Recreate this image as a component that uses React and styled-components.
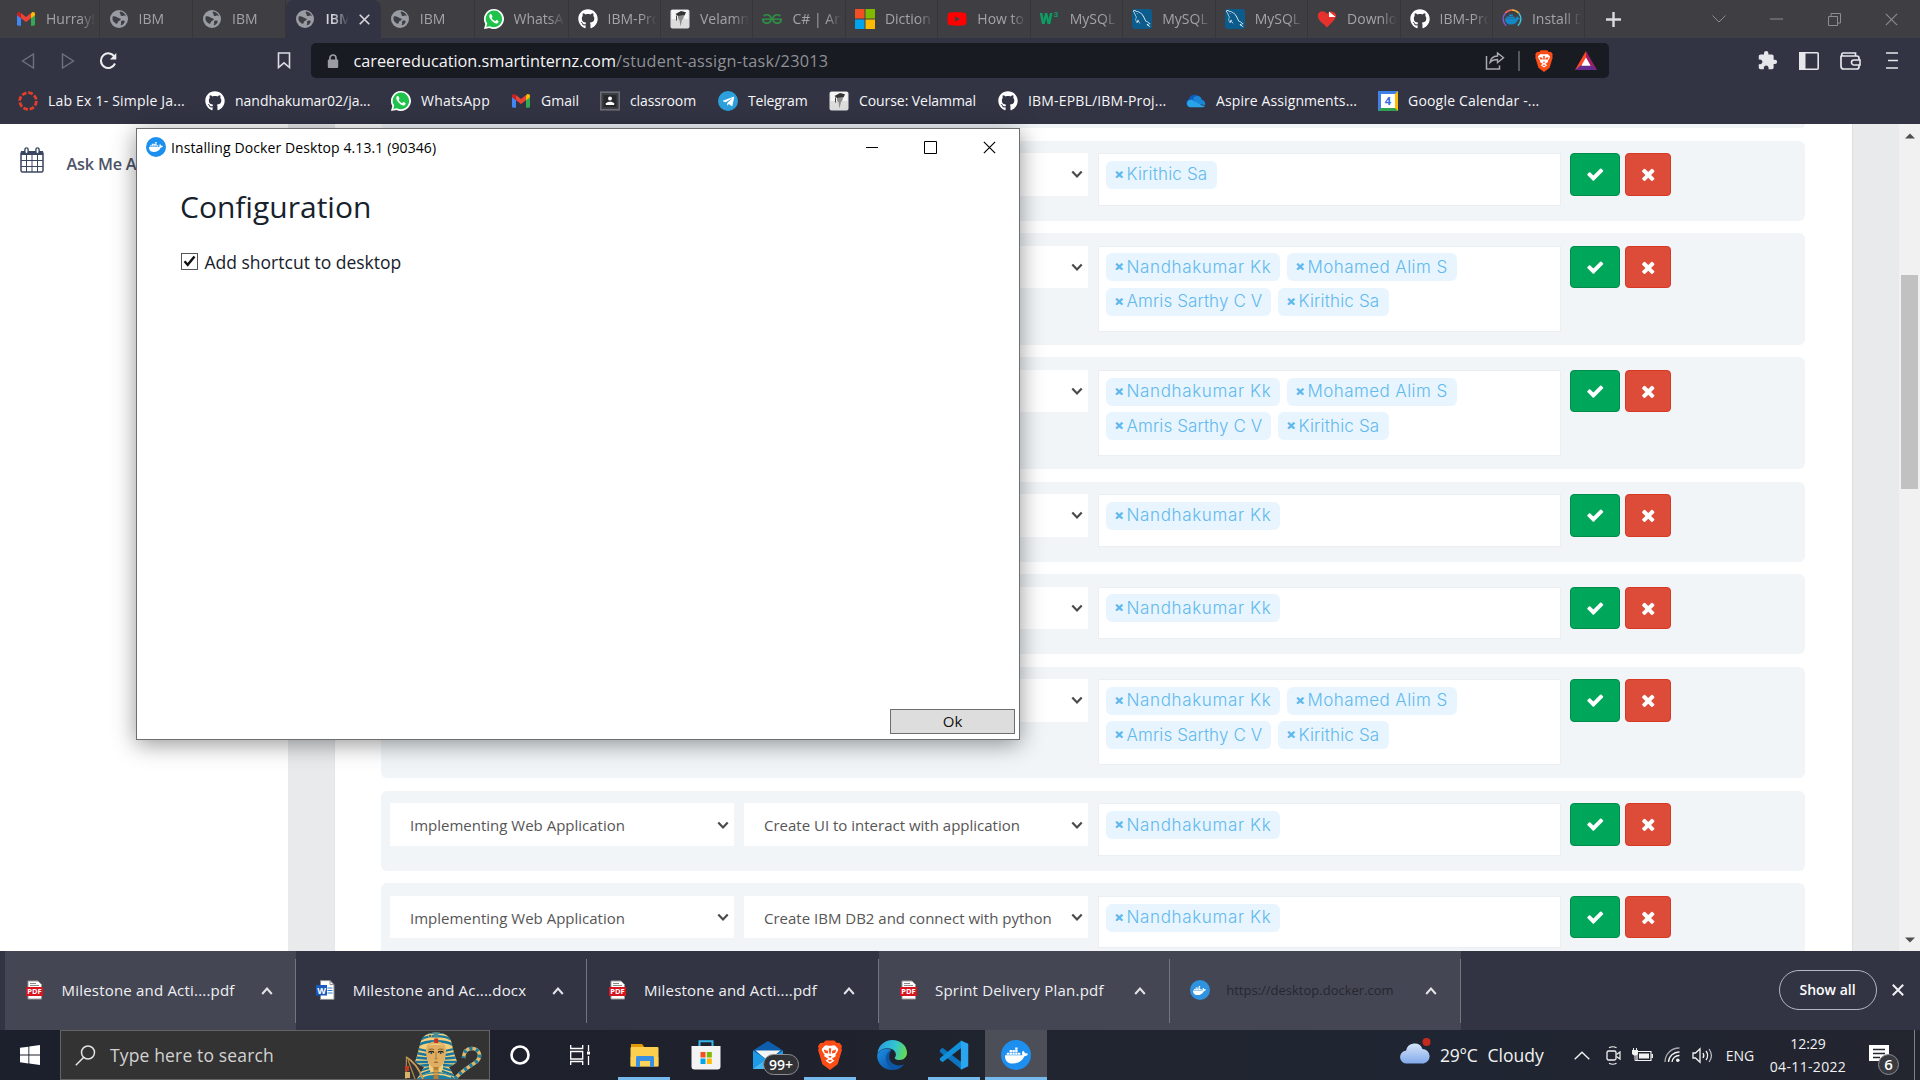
import React from "react";
import styled, { createGlobalStyle } from "styled-components";
import { FaGithub, FaDocker, FaTelegramPlane, FaYoutube } from "react-icons/fa";
import { SiGeeksforgeeks } from "react-icons/si";
import { GrMysql } from "react-icons/gr";
import { MdExtension } from "react-icons/md";

const GlobalStyle = createGlobalStyle`
  * { box-sizing: border-box; }
  body { margin: 0; background: #fff; }
`;

const ui = `"Open Sans", "Noto Sans", sans-serif`;

/* ---------- icons ---------- */

const Svg = ({ w = 20, h = w, vb, children, ...rest }) => (
  <svg width={w} height={h} viewBox={vb || `0 0 ${w} ${h}`} fill="none" {...rest}>
    {children}
  </svg>
);

const Gmail = () => (
  <Svg w={20} h={20}>
    <path d="M1 5.2v10.4c0 .7.6 1.2 1.200 1.200H5V9z" fill="#4285f4" />
    <path d="M19 5.2v10.400c0 .7-.6 1.200-1.200 1.200H15V9z" fill="#34a853" />
    <path d="M15 4.600V9.200l4-3V4.800c0-1.600-1.800-2.400-3-1.500z" fill="#fbbc04" />
    <path d="M5 4.600V9.200l-4-3V4.800c0-1.600 1.800-2.400 3-1.500z" fill="#c5221f" />
    <path d="M5 4.100 10 7.900l5-3.800v5.100l-5 3.800-5-3.800z" fill="#ea4335" />
  </Svg>
);

const Globe = () => (
  <Svg>
    <circle cx="10" cy="10" r="9" fill="#9a9ca4" />
    <path d="M3.200 6.500c2-1 3.800.2 5.300 1.300 1.500 1 3 .3 2.700 1.700-.3 1.600-2.400 1-2.800 2.500-.3 1.200-.8 2.300-1.900 1.600C4.800 12.500 2 10.500 3.200 6.500z" fill="#3e3e45" transform="translate(.5 1)" />
    <path d="M11 2.600c-1.200 1.500.8 2 .6 3.200-.2 1 1.200 1.600 2.500 1 1.500-.7 2.400.2 3 1.100-.6-2.900-3-5-6.100-5.300z" fill="#3e3e45" />
    <path d="M12.500 12c1.500-.8 3.300-.6 3.200.7-.3 1.700-2.200 3.400-3.700 3.600-.8-.6.500-1.300.1-2.300-.2-.9-.3-1.500.4-2z" fill="#3e3e45" />
  </Svg>
);

const Disc = styled.span`
  display: inline-flex;
  align-items: center;
  justify-content: center;
  flex: none;
  width: ${(p) => p.$size || 20}px;
  height: ${(p) => p.$size || 20}px;
  border-radius: ${(p) => p.$radius || "50%"};
  background: ${(p) => p.$bg};
  color: #fff;
  font-size: ${(p) => p.$icon || 14}px;
`;

const WhatsApp = () => (
  <Svg>
    <path d="M10 0a10 10 0 1 1-4.600 18.900L0 20l1.300-5A10 10 0 0 1 10 0z" fill="#fff" />
    <path d="M10 1.600a8.300 8.300 0 1 1-4.100 15.600l-3.600.9.9-3.500A8.300 8.300 0 0 1 10 1.600z" fill="#1fc24a" />
    <path d="M7.300 5.300c-.3-.5-.9-.4-1.300 0-1.200 1.200-1 3 .5 5 1.700 2.300 3.500 3.800 5.600 4.100 1.300.1 2.400-.6 2.500-2 0-.4-1.800-1.400-2.200-1.300-.4.1-.7 1.200-1.200 1.100-1.500-.5-2.800-1.700-3.500-3.100-.1-.5.8-.9.8-1.400 0-.4-.8-1.900-1.200-2.400z" fill="#fff" />
  </Svg>
);

const Canvas = () => (
  <Svg>
    <circle cx="10" cy="10" r="8.300" stroke="#e13f2b" strokeWidth="2.800" strokeDasharray="4.700 1.820" />
  </Svg>
);

const Graduate = () => (
  <Svg>
    <rect x=".5" y=".5" width="19" height="19" rx="2" fill="#dcdcdc" />
    <rect x="1.500" y="1" width="17" height="9" fill="#f4f4f4" />
    <path d="M5.500 5 11 2l5 1.200-1.500 3.300-6.500.5z" fill="#333" />
    <path d="M8 7c-.5 2 .3 3 1.500 4l1 6.500L12 11c1.500-1 2-2.500 1.800-4.200z" fill="#8c8c8c" />
    <path d="M6.500 6.500v5" stroke="#444" />
  </Svg>
);

const Windows = ({ size = 20, mono }) => (
  <Svg w={size} vb="0 0 20 20">
    {mono ? (
      <path d="M0 2.800 8.400 1.700v7.900H0zM9.300 1.500 20 0v9.600H9.300zM0 10.500h8.400v7.900L0 17.200zM9.300 10.500H20V20L9.300 18.500z" fill="#fff" />
    ) : (
      <>
        <path d="M0 0h9.500v9.500H0z" fill="#f25022" />
        <path d="M10.500 0H20v9.500h-9.500z" fill="#7fba00" />
        <path d="M0 10.500h9.500V20H0z" fill="#00a4ef" />
        <path d="M10.500 10.500H20V20h-9.500z" fill="#ffb900" />
      </>
    )}
  </Svg>
);

const W3 = styled.span`
  display: flex;
  align-items: flex-start;
  gap: 1px;
  width: 20px;
  flex: none;
  color: #0c9d63;
  font: 900 15px/18px "Roboto", sans-serif;
`;

const W3Power = styled.span`
  font: 700 8px/9px "Roboto", sans-serif;
`;

const Heart = () => (
  <Svg>
    <path d="M10 18.500C7 15 .8 11.800.8 6.800.8 1.700 7.500.3 10 5c1.500-3.500 7-3.500 8.700 0 1.600 5-4.700 9-8.700 13.500z" fill="#e5322d" />
    <path d="M12 2.500 18.700 8H12z" fill="#fff" />
  </Svg>
);

const DockerDocs = () => (
  <Svg>
    <path d="M3.200 4.200A9 9 0 0 1 10 1" stroke="#f26b5b" strokeWidth="1.500" />
    <path d="M10 1a9 9 0 0 1 6.800 3.200" stroke="#f5b33c" strokeWidth="1.500" />
    <path d="M16.800 4.200a9 9 0 0 1-1 12.500" stroke="#3fc5dc" strokeWidth="1.500" />
    <path d="M3.200 4.200a9 9 0 0 0 1 12.500" stroke="#7e5bd0" strokeWidth="1.500" />
    <path d="M3 9.300h11c.2-1.300 1-1.900 1.500-2 .6.400.9 1 .9 1.700 1-.2 1.600 0 2 .3-.5 1-1.300 1.300-2.300 1.300-1 3.200-3.400 5-7 5-4 0-6-2-6.100-6.300zM4.500 7.500h8V9h-8zM7 5.500h4V7H7z" fill="#1488c6" />
  </Svg>
);

const Contact = () => (
  <Svg>
    <rect x=".7" y="1.200" width="18.600" height="17.600" fill="#3b3e43" stroke="#6b6f74" strokeWidth="1.600" />
    <rect x="3.500" y="4" width="13" height="12" fill="#26282c" />
    <circle cx="10" cy="7.500" r="2" fill="#fff" />
    <path d="M5.800 14v-1.500c1.400-2.300 7-2.300 8.400 0V14z" fill="#fff" />
  </Svg>
);

const OneDrive = () => (
  <Svg>
    <path d="M2 15.500a4.200 4.200 0 0 1 .8-7.200A6 6 0 0 1 14 7.200l-3 4.800z" fill="#0f5cb8" />
    <path d="M7 8.500a4.500 4.500 0 0 1 8.800.3A4 4 0 0 1 19 14l-8-1z" fill="#1a86d8" />
    <path d="M3.500 16.300A4.200 4.200 0 0 1 2 9.800c2.500-1.800 4.500-1 6 .2l8 4.500 3 .3c-.7 1-1.700 1.500-3 1.500z" fill="#28a4ea" />
  </Svg>
);

const CalBox = styled.span`
  display: inline-flex;
  align-items: center;
  justify-content: center;
  flex: none;
  width: 20px;
  height: 20px;
  background: #fff;
  border-style: solid;
  border-width: 3.500px;
  border-color: #3f7fe8 #fbbc04 #30a14e #3f7fe8;
  color: #2b6de0;
  font: 700 11px/12px ${ui};
`;

const BraveLion = ({ size = 20 }) => (
  <Svg w={size} vb="0 0 24 24">
    <path d="M6.800 2.200 8.500.4h7l1.700 1.800 2.600.1 1.800 2.700-.5 1.600.4 1.600-3.400 11.200L12 23.900l-6.100-4.500L2.500 8.200l.4-1.600L2.400 5l1.800-2.700z" fill="#fb4d15" />
    <path d="M12 4.500c1.600.3 2.700-.3 3.600-.2 1 .3 2.500 2.200 3 3-.3 1.500-.8 2.400-2.200 4 .3 1 .3 1.900-.8 2.300L13.500 15l2 1.500-3.500 2.500-3.500-2.500 2-1.500-2.100-1.400c-1.100-.4-1.100-1.300-.8-2.300-1.400-1.600-1.900-2.500-2.200-4 .5-.8 2-2.700 3-3 .9-.1 2 .5 3.600.2z" fill="#fff" />
    <path d="m7 7.600 3.600 1.100-.4 2-2.400-.6zM17 7.600l-3.600 1.100.4 2 2.400-.6zM10.600 12.700h2.800L12 14.600zM12 6.300l1 .6-.5 4h-1l-.5-4zM10.200 16.500l1.800-.8 1.800.8L12 17.500z" fill="#fb4d15" />
  </Svg>
);

const Bat = () => (
  <Svg w={22} h={20}>
    <path d="M11 0 0 19l11-5.500z" fill="#ff4724" />
    <path d="M11 0l11 19-11-5.500z" fill="#9e1f63" />
    <path d="M0 19h22l-6-5H6z" fill="#662d91" />
    <path d="m11 6.500 4.700 8.200H6.300z" fill="#fff" />
  </Svg>
);

const CheckMark = () => (
  <Svg w={18.500} vb="0 0 1792 1792">
    <path fill="#fff" d="M1671 566q0 40-28 68l-724 724-136 136q-28 28-68 28t-68-28l-136-136-362-362q-28-28-28-68t28-68l136-136q28-28 68-28t68 28l294 295 656-657q28-28 68-28t68 28l136 136q28 28 28 68z" />
  </Svg>
);

const CrossMark = () => (
  <Svg w={18.500} vb="0 0 1792 1792">
    <path fill="#fff" d="M1490 1322q0 40-28 68l-136 136q-28 28-68 28t-68-28l-294-294-294 294q-28 28-68 28t-68-28l-136-136q-28-28-28-68t28-68l294-294-294-294q-28-28-28-68t28-68l136-136q28-28 68-28t68 28l294 294 294-294q28-28 68-28t68 28l136 136q28 28 28 68t-28 68l-294 294 294 294q28 28 28 68z" />
  </Svg>
);

const Chevron = ({ up, w = 11, stroke = "#4a4a4a", sw = 2.200 }) => (
  <Svg w={w} h={w} vb="0 0 12 12">
    <path d={up ? "M1.200 9 6 3.500 10.800 9" : "M1.300 3.500 6 8.500l4.700-5"} stroke={stroke} strokeWidth={sw} />
  </Svg>
);

const Cross = ({ w = 12, stroke = "#d8d8dc", sw = 1.800 }) => (
  <Svg w={w} vb="0 0 12 12">
    <path d="m.8.800 10.400 10.400M11.200.800.8 11.200" stroke={stroke} strokeWidth={sw} />
  </Svg>
);

const PdfIcon = () => (
  <Svg w={17} h={20}>
    <path d="M2 1h10l3.500 3.500V19H2z" fill="#fff" stroke="#9a9a9a" />
    <path d="M4 3.500h6M4 5.500h9" stroke="#8a8a8a" />
    <rect x="0" y="7" width="17" height="9" fill="#d8141f" />
    <text x="8.500" y="14.300" textAnchor="middle" fill="#fff" fontFamily="Open Sans" fontWeight="700" fontSize="7.500">PDF</text>
  </Svg>
);

const WordIcon = () => (
  <Svg w={19} h={20}>
    <path d="M4.500.6h9.500l4 4V19.400H4.500z" fill="#fff" stroke="#8a8a8a" />
    <path d="M14 .6v4h4" stroke="#8a8a8a" />
    <path d="M11.500 8h5M11.500 10.500h5M11.500 13h5" stroke="#2b7cd3" strokeWidth="1.200" />
    <rect x="0" y="5" width="11" height="10.500" fill="#185abd" />
    <text x="5.500" y="13.500" textAnchor="middle" fill="#fff" fontFamily="Open Sans" fontWeight="700" fontSize="9">W</text>
  </Svg>
);

const Pharaoh = () => (
  <Svg w={78} h={48}>
    <defs>
      <clipPath id="nemes">
        <path d="M32 1.500c9 0 14 4 15.500 10 1.500 7 3 13 5.500 19-2 3-5 4-8 5.500L52 48H13l7-12c-3-1-7-3-9-5.500C13.500 25 14.500 18 16.500 11.500 18.500 5 23 1.500 32 1.500z" />
      </clipPath>
    </defs>
    <g clipPath="url(#nemes)">
      <rect width="78" height="48" fill="#f3cf7a" />
      <g stroke="#1576a0" strokeWidth="2.300">
        <path d="M20 3.500c4-3 20-3 24 0M17 8.500c6-4.500 24-4.500 30 0M15 14c7-5 27-5 34 0" />
        <path d="M12 17.500 23 20M12 22l11 2M11 26.500l12 1M10 31l14 0M13 35l12-1M15 40l10-3M12 45l14-5" />
        <path d="M52 17.500 41 20M52 22l-11 2M53 26.500l-12 1M54 31l-14 0M51 35l-12-1M49 40l-10-3M52 45l-14-5" />
      </g>
    </g>
    <path d="M22 20c0-7 4-9.500 10-9.500S42 13 42 20c0 8-3.500 15-7.500 17.500h-5C25.500 35 22 28 22 20z" fill="#dfae62" />
    <path d="M24 15c3-3 13-3 16 0-2-1-5-1.200-8-1.200S26 14 24 15z" fill="#f6d98c" />
    <path d="M24.500 21.500c1.500-1.500 4-1.500 5.500 0M34 21.500c1.500-1.500 4-1.500 5.500 0" stroke="#1a1a1a" strokeWidth="1.300" />
    <path d="M24.500 18.800c1.500-1 4-1 5.500 0M34 18.800c1.500-1 4-1 5.500 0" stroke="#6b4a1e" strokeWidth=".8" />
    <circle cx="27.300" cy="22" r="1" fill="#14455c" />
    <circle cx="36.700" cy="22" r="1" fill="#14455c" />
    <path d="M32 21v6.500M30.500 27.800h3" stroke="#a8722d" strokeWidth=".9" />
    <path d="M29.500 31.200c1.700-.8 3.300-.8 5 0-1.700 1-3.300 1-5 0z" fill="#9a5a30" />
    <path d="M30.200 7.500h4v4.500h-4z" fill="#c8321f" />
    <circle cx="32" cy="4" r="2.600" fill="#4a8c94" />
    <circle cx="26" cy="5" r="1.600" fill="#2d5f66" stroke="#f3cf7a" strokeWidth=".6" />
    <path d="M13 48c6-5 12-7 19-7s14 2 19 7z" fill="#1a7fa5" />
    <path d="M17 46c9-4 21-4 30 0" stroke="#f3cf7a" strokeWidth="1.500" />
    <path d="M29.500 36h5L34.500 48h-5z" fill="#b47e38" />
    <path d="M30 40h4M30 43h4" stroke="#e6bd6a" />
    <path d="M2 26c7 4 13 11 17 22" stroke="#c79a55" strokeWidth="2" />
    <path d="M2.500 26 2 48M4 29l7 19" stroke="#b5894b" strokeWidth="1.200" />
    <path d="M1 35h4v5H1z" fill="#c43a20" />
    <path d="M1 41h5v6H1z" fill="#d8b36a" />
    <path d="M51 48c6-8 14-12 21-17 6-5 4-13-4-13.500-5-.2-8 3-8.500 9.500" stroke="#e3b868" strokeWidth="3.600" />
    <path d="M51 48c6-8 14-12 21-17 6-5 4-13-4-13.500-5-.2-8 3-8.500 9.500" stroke="#1a7fa5" strokeWidth="3.600" strokeDasharray="3 3.500" />
  </Svg>
);

const Explorer = () => (
  <Svg w={29} h={24}>
    <path d="M1 1h11l2 2.500V6H1z" fill="#e19a00" />
    <rect x=".5" y="4" width="28" height="19.500" rx="1" fill="#fccf4f" />
    <path d="M.5 14h28v9.500H.5z" fill="#fdd663" opacity=".6" />
    <path d="M6 24v-9.500C6 13.500 6.700 13 7.500 13h15c.8 0 1.500.6 1.500 1.500V24h-4v-6H10v6z" fill="#3a90e0" />
  </Svg>
);

const Store = () => (
  <Svg w={30} h={30}>
    <path d="M8.500 7V1.300h13V7" stroke="#35b5ea" strokeWidth="2" />
    <path d="M.5 6h29v20.500a3 3 0 0 1-3 3h-23a3 3 0 0 1-3-3z" fill="#f3f3f3" />
    <path d="M9.500 12h5v5.500h-5z" fill="#f25022" />
    <path d="M15.800 12h5v5.500h-5z" fill="#7fba00" />
    <path d="M9.500 18.500h5V24h-5z" fill="#00a4ef" />
    <path d="M15.800 18.500h5V24h-5z" fill="#ffb900" />
  </Svg>
);

const Mail = () => (
  <Svg w={30} h={30}>
    <path d="M0 10.500 15 1l15 9.500L15 20z" fill="#0d5fae" />
    <path d="M2.500 10.500h25L15 21z" fill="#f4f4f4" />
    <path d="M0 10.500 15 20l15-9.500V29H0z" fill="#1d9be6" />
    <path d="m0 29 15-11 15 11z" fill="#45b8f2" />
  </Svg>
);

const Edge = () => (
  <Svg w={30} h={30}>
    <defs>
      <linearGradient id="edgeTop" x1="2" y1="6" x2="29" y2="14" gradientUnits="userSpaceOnUse">
        <stop offset="0" stopColor="#2b9de0" />
        <stop offset=".55" stopColor="#32c5cf" />
        <stop offset="1" stopColor="#64dc52" />
      </linearGradient>
      <linearGradient id="edgeLow" x1="2" y1="12" x2="20" y2="30" gradientUnits="userSpaceOnUse">
        <stop offset="0" stopColor="#1b88dc" />
        <stop offset="1" stopColor="#0b4b9b" />
      </linearGradient>
    </defs>
    <path d="M.5 13C1.500 5.500 7.500 0 15.200 0 23.500 0 30 5.600 30 12.800c0 4.700-3.500 7.200-7.200 7.200-4 0-5.800-1.600-4.800-2.800 1.800-2 .9-6.200-2.800-8C10.500 7 3.500 8.500.5 13z" fill="url(#edgeTop)" />
    <path d="M.3 14.500C2 9.500 9.500 7 14.500 10c-3 1.500-4.200 4.500-4 7.500.3 5 4.800 8.500 10 8.500 2.300 0 4.200-.6 6.200-1.600C24 28 19.800 30 15.200 30 6.500 30-.6 23.200.3 14.500z" fill="url(#edgeLow)" />
    <path d="M14.500 10c-5 2-6.800 7-5 12 1.500 4 5 7 9.500 7.600 3.500-.8 6.300-2.800 8.200-5.300-7 3.300-15-.8-15-7.300 0-2.800.8-5 2.300-7z" fill="#0c56a6" />
  </Svg>
);

const VsCode = () => (
  <Svg w={30} h={30} vb="0 0 24 24">
    <path d="M.7 8 2.800 6.200 18 17.800V23.600L.7 9.500z" fill="#0d74bf" />
    <path d="M.7 16 2.800 17.800 18 6.200V.4L.7 14.500z" fill="#1390dc" />
    <path d="M17.500.3 23.400 3v18l-5.900 2.700z" fill="#2aa5f0" />
  </Svg>
);

const Cloud = () => (
  <Svg w={32} h={26}>
    <defs>
      <linearGradient id="cloud" x1="0" y1="4" x2="0" y2="26" gradientUnits="userSpaceOnUse">
        <stop offset="0" stopColor="#dce9fb" />
        <stop offset="1" stopColor="#7fa8ea" />
      </linearGradient>
    </defs>
    <path d="M7 25.500a6.500 6.500 0 0 1-.8-13A8.500 8.500 0 0 1 22.500 11 7.300 7.300 0 0 1 23.500 25.500z" fill="url(#cloud)" />
    <circle cx="26.500" cy="4" r="4" fill="#c42b1c" />
  </Svg>
);

/* ---------- browser chrome ---------- */

const Screen = styled.div`
  position: relative;
  display: flex;
  flex-direction: column;
  width: 1920px;
  height: 1080px;
  overflow: hidden;
  font-family: ${ui};
  background: #fff;
`;

const TabStrip = styled.div`
  display: flex;
  flex: none;
  height: 38px;
  padding-left: 7px;
  background: #3f3e43;
`;

const Tab = styled.div`
  display: flex;
  align-items: center;
  flex: none;
  width: ${(p) => p.$w}px;
  padding: 0 ${(p) => (p.$active ? 9 : 3)}px 0 9px;
  gap: 10px;
  background: ${(p) => (p.$active ? "#323444" : "transparent")};
  border-radius: ${(p) => (p.$active ? "8px 8px 0 0" : 0)};
  border-right: 1px solid ${(p) => (p.$active ? "transparent" : "#36353a")};
  & > svg { flex: none; }
`;

const TabTitle = styled.span`
  flex: ${(p) => (p.$active ? "0 0 24px" : "1 1 0")};
  min-width: 0;
  white-space: nowrap;
  font-size: 14px;
  line-height: 20px;
  color: ${(p) => (p.$active ? "#d3d4da" : "#a4a4a8")};
  font-weight: ${(p) => (p.$active ? 600 : 400)};
  mask-image: linear-gradient(90deg, #000 calc(100% - 16px), transparent 100%);
`;

const NewTab = styled.div`
  display: flex;
  align-items: center;
  justify-content: center;
  width: 57px;
`;

const WindowButtons = styled.div`
  display: flex;
  margin-left: auto;
`;

const WindowButton = styled.div`
  display: flex;
  align-items: center;
  justify-content: center;
  width: 57.300px;
`;

const Toolbar = styled.div`
  display: flex;
  align-items: center;
  flex: none;
  height: 45px;
  background: #323444;
`;

const NavGroup = styled.div`
  display: flex;
  width: 304px;
  padding-left: 8px;
  & > :last-child { margin-left: auto; }
`;

const NavButton = styled.div`
  display: flex;
  align-items: center;
  justify-content: center;
  width: ${(p) => p.$w || 40}px;
  height: 36px;
`;

const AddressBar = styled.div`
  display: flex;
  align-items: center;
  width: 1298px;
  height: 35px;
  margin-left: 7px;
  padding: 0 12px 0 15px;
  border-radius: 5px;
  background: #191b22;
`;

const Url = styled.div`
  display: flex;
  margin-left: 13.500px;
  font-size: 16.250px;
  line-height: 24px;
  color: #f4f4f6;
  white-space: nowrap;
`;

const UrlPath = styled.span`
  letter-spacing: 0.26px;
  color: #8f9196;
`;

const AddressTools = styled.div`
  display: flex;
  align-items: center;
  gap: 20px;
  margin-left: auto;
`;

const ShareSlot = styled.div`
  display: flex;
  padding-right: 13px;
  margin-right: -7px;
  border-right: 2px solid #56585f;
  height: 20px;
`;

const Extensions = styled.div`
  display: flex;
  margin-left: auto;
  padding-right: 7px;
`;

const BookmarksBar = styled.div`
  display: flex;
  flex: none;
  height: 41px;
  padding: 0 0 5px 18px;
  background: #323444;
`;

const Bookmark = styled.div`
  display: flex;
  align-items: center;
  flex: none;
  gap: 10px;
  width: ${(p) => p.$w}px;
  font-size: 14px;
  letter-spacing: ${(p) => p.$ls || 0}px;
  white-space: nowrap;
  color: #f6f6f8;
  & > svg { flex: none; }
  & > :last-child { padding-bottom: 1.500px; }
`;

/* ---------- web page ---------- */

const Page = styled.div`
  display: flex;
  flex: none;
  height: 827px;
  overflow: hidden;
  background: #e9eaec;
`;

const Sidebar = styled.div`
  flex: none;
  width: 288px;
  padding: 23px 0 0 19.500px;
  background: #fff;
`;

const SidebarItem = styled.div`
  display: flex;
  align-items: center;
  gap: 23px;
  height: 30px;
  font-size: 16.250px;
  font-weight: 600;
  letter-spacing: -0.2px;
  line-height: 28px;
  color: #4d5468;
  & > svg { margin-top: -4px; }
  & > span { padding-top: 3px; }
`;

const Panel = styled.div`
  display: flex;
  flex-direction: column;
  gap: 12.500px;
  flex: none;
  width: 1519px;
  margin-left: 46px;
  padding: 0 47px 0 46px;
  background: #fff;
  border-left: 1px solid #e4e6e9;
  border-right: 1px solid #dcdee0;
`;

const TaskRow = styled.div`
  display: flex;
  align-items: flex-start;
  flex: none;
  height: ${(p) => p.$h}px;
  padding: 12.500px 9px 0;
  border-radius: 6px;
  background: #f1f5f8;
`;

const RowTail = styled.div`
  flex: none;
  height: 4px;
  border-radius: 0 0 6px 6px;
  background: #f1f5f8;
`;

const Select = styled.div`
  display: flex;
  align-items: center;
  justify-content: space-between;
  flex: none;
  width: 344px;
  height: 42.500px;
  margin-right: 10px;
  padding: 1px 5px 0 20px;
  background: #fff;
  color: #565656;
  font-size: 15px;
  white-space: nowrap;
  & > svg { margin-top: -1px; }
`;

const Assignees = styled.div`
  display: flex;
  flex-wrap: wrap;
  align-content: flex-start;
  gap: 6.600px 7px;
  flex: none;
  width: 463px;
  height: ${(p) => p.$h}px;
  margin-right: 9px;
  padding: 6.800px 0 0 7px;
  background: #fff;
  border: 1px solid #eaeff3;
`;

const Tag = styled.div`
  display: flex;
  align-items: center;
  width: ${(p) => p.$w}px;
  height: 28px;
  padding: 0 0 1px 8.500px;
  border-radius: 6px;
  background: #e8f5fe;
  color: #62b9ed;
  font: 300 17px "Inter", sans-serif;
  letter-spacing: ${(p) => p.$ls}px;
  white-space: nowrap;
`;

const TagRemove = styled.span`
  width: 12px;
  letter-spacing: 0;
  font: 700 11px "DejaVu Sans", sans-serif;
  color: #5cb8ee;
  -webkit-text-stroke: 0.8px #5cb8ee;
`;

const ActionButton = styled.div`
  display: flex;
  align-items: center;
  justify-content: center;
  width: ${(p) => (p.$danger ? 46 : 50)}px;
  height: 42.500px;
  margin-right: 5px;
  border-radius: 4px;
  border: 1px solid ${(p) => (p.$danger ? "#d73925" : "#008d4c")};
  background: ${(p) => (p.$danger ? "#dd4b39" : "#00a65a")};
`;

const ScrollTrack = styled.div`
  display: flex;
  flex-direction: column;
  align-items: center;
  justify-content: space-between;
  width: 21px;
  margin-left: auto;
  padding: 9px 0 8px;
  background: #f1f1f1;
`;

const ScrollThumb = styled.div`
  width: 17px;
  height: 214px;
  margin: 136px 0 auto;
  background: #c1c1c1;
`;

/* ---------- installer window ---------- */

const Installer = styled.div`
  position: absolute;
  left: 136px;
  top: 128px;
  display: flex;
  flex-direction: column;
  width: 884px;
  height: 612px;
  border: 1px solid #6d6e70;
  background: #fff;
  box-shadow: 0 4px 22px rgba(0, 0, 0, 0.42);
`;

const TitleBar = styled.div`
  display: flex;
  align-items: center;
  height: 36px;
  padding-left: 9px;
  font-size: 14px;
  letter-spacing: 0.1px;
  color: #000;
`;

const TitleText = styled.span`
  margin-left: 5px;
`;

const CaptionButtons = styled(WindowButtons)`
  padding-right: 0.500px;
`;

const CaptionButton = styled.div`
  display: flex;
  justify-content: center;
  width: 58.600px;
`;

const InstallerBody = styled.div`
  flex: 1;
  padding: 21px 0 0 43px;
  color: #17212b;
`;

const Heading = styled.div`
  font-size: 30px;
  line-height: 42px;
`;

const CheckRow = styled.div`
  display: flex;
  align-items: center;
  gap: 7px;
  margin-top: 22px;
  padding-left: 0.500px;
  font-size: 17.500px;
  line-height: 24px;
`;

const CheckBox = styled.span`
  display: flex;
  align-items: center;
  justify-content: center;
  width: 17px;
  height: 17px;
  margin-top: -2px;
  border: 1px solid #555;
`;

const InstallerFooter = styled.div`
  display: flex;
  justify-content: flex-end;
  padding: 0 4px 5px;
`;

const OkButton = styled.div`
  width: 125px;
  height: 25px;
  border: 1px solid #6f6f6f;
  background: #dddddd;
  text-align: center;
  font-size: 15px;
  line-height: 23px;
  color: #111;
`;

/* ---------- downloads shelf ---------- */

const Shelf = styled.div`
  display: flex;
  flex: none;
  height: 79px;
  padding-left: 5px;
  background: #323444;
`;

const DownloadItem = styled.div`
  display: flex;
  align-items: center;
  width: 291.200px;
  background: ${(p) => (p.$lit ? "#444654" : "transparent")};
`;

const DownloadIcon = styled.span`
  display: flex;
  justify-content: center;
  width: 56.500px;
  padding: 0 0 1px 3px;
`;

const DownloadName = styled.span`
  flex: 1;
  padding-bottom: 2px;
  font-size: ${(p) => (p.$dim ? 13 : 15)}px;
  letter-spacing: ${(p) => (p.$dim ? 0 : 0.2)}px;
  color: ${(p) => (p.$dim ? "#252830" : "#f0f0f2")};
  white-space: nowrap;
`;

const DownloadMenu = styled.span`
  display: flex;
  align-items: center;
  justify-content: flex-start;
  width: 35.500px;
  height: 64px;
  border-right: 1px solid #73757f;
`;

const ShelfActions = styled.div`
  display: flex;
  align-items: center;
  gap: 15px;
  margin-left: auto;
  padding: 0 16.500px 1px 0;
`;

const ShowAll = styled.div`
  width: 98px;
  height: 40px;
  border: 1px solid #b4b6c4;
  border-radius: 20px;
  text-align: center;
  font-size: 14px;
  font-weight: 600;
  line-height: 37px;
  color: #fff;
`;

/* ---------- taskbar ---------- */

const Taskbar = styled.div`
  display: flex;
  flex: none;
  height: 50px;
  background: linear-gradient(90deg, #1c202c 0%, #1f222d 40%, #20252f 60%, #1f2532 75%, #23252f 100%);
`;

const StartButton = styled.div`
  display: flex;
  align-items: center;
  justify-content: center;
  width: 60px;
`;

const SearchBox = styled.div`
  display: flex;
  align-items: center;
  width: 430px;
  padding: 0 7px 0 14px;
  border: 1px solid #646464;
  background: #333333;
  color: #d2d2d2;
  font-size: 17.500px;
  letter-spacing: 0.15px;
  & > svg:last-child { margin-left: auto; }
`;

const SearchText = styled.span`
  margin-left: 14px;
`;

const TaskButton = styled.div`
  position: relative;
  display: flex;
  align-items: center;
  justify-content: center;
  width: ${(p) => p.$w || 62}px;
  background: ${(p) => (p.$current ? "#4c4e58" : "transparent")};
  &::after {
    content: "";
    position: absolute;
    bottom: 0;
    left: ${(p) => (p.$current ? 0 : 5)}px;
    right: ${(p) => (p.$current ? 0 : 5)}px;
    height: ${(p) => (p.$open || p.$current ? 3 : 0)}px;
    background: #76b9ed;
  }
`;

const PinnedApps = styled.div`
  display: flex;
  margin-left: 3px;
`;

const MailBadge = styled.span`
  position: absolute;
  left: 26px;
  top: 24px;
  width: 36px;
  height: 21px;
  border: 1px solid #8d8f92;
  border-radius: 11px;
  background: #303236;
  color: #fff;
  text-align: center;
  font-size: 14px;
  font-weight: 600;
  line-height: 19px;
`;

const Tray = styled.div`
  display: flex;
  margin-left: auto;
  padding-right: 5px;
  color: #f2f2f2;
`;

const Weather = styled.div`
  display: flex;
  align-items: center;
  width: 166px;
  font-size: 17.500px;
  white-space: pre;
  & > svg { margin: -8px 8px 0 0; }
  span { margin-right: 10px; letter-spacing: -0.250px; }
`;

const TrayCell = styled.div`
  display: flex;
  align-items: center;
  justify-content: center;
  width: ${(p) => p.$w}px;
  font-size: 14px;
`;

const Clock = styled.div`
  display: flex;
  flex-direction: column;
  align-items: center;
  width: 88px;
  padding-top: 2px;
  font-size: 14px;
  line-height: 23px;
  white-space: nowrap;
`;

const DateText = styled.span`
  letter-spacing: 0.34px;
`;

const Notifications = styled.div`
  position: relative;
  display: flex;
  width: 63px;
  padding: 15px 0 0 17px;
  border-right: 1px solid #7d8087;
`;

const CountBadge = styled.span`
  position: absolute;
  left: 26px;
  top: 24px;
  width: 21px;
  height: 21px;
  border: 1px solid #8b8d91;
  border-radius: 50%;
  background: #393b40;
  color: #fff;
  text-align: center;
  font-size: 15px;
  font-weight: 600;
  line-height: 19px;
`;

/* ---------- data ---------- */

const Github = () => <FaGithub size={20} color="#fff" />;
const Mysql = () => <Disc $bg="#0b5c8c" $radius="3px" $icon={18}><GrMysql /></Disc>;

const tabs = [
  { icon: <Gmail />, title: "Hurray!", w: 92.6 },
  { icon: <Globe />, title: "IBM", w: 93.4 },
  { icon: <Globe />, title: "IBM", w: 93.5 },
  { icon: <Globe />, title: "IBM", w: 94.3, active: true },
  { icon: <Globe />, title: "IBM", w: 93.8 },
  { icon: <WhatsApp />, title: "WhatsA", w: 94 },
  { icon: <Github />, title: "IBM-Pro" },
  { icon: <Graduate />, title: "Velamm" },
  { icon: <SiGeeksforgeeks size={20} color="#2f8d46" />, title: "C# | Arr" },
  { icon: <Windows />, title: "Diction" },
  { icon: <FaYoutube size={20} color="#ff0000" />, title: "How to" },
  { icon: <W3>W<W3Power>3</W3Power></W3>, title: "MySQL" },
  { icon: <Mysql />, title: "MySQL" },
  { icon: <Mysql />, title: "MySQL" },
  { icon: <Heart />, title: "Downlo" },
  { icon: <Github />, title: "IBM-Pro" },
  { icon: <DockerDocs />, title: "Install D" },
];

const bookmarks = [
  { icon: <Canvas />, label: "Lab Ex 1- Simple Ja...", w: 187, ls: 0.2 },
  { icon: <Github />, label: "nandhakumar02/ja...", w: 186, ls: -0.02 },
  { icon: <WhatsApp />, label: "WhatsApp", w: 120, ls: 0.26 },
  { icon: <Gmail />, label: "Gmail", w: 89 },
  { icon: <Contact />, label: "classroom", w: 118, ls: -0.1 },
  { icon: <Disc $bg="#2ca0dc" $icon={13}><FaTelegramPlane /></Disc>, label: "Telegram", w: 111, ls: -0.2 },
  { icon: <Graduate />, label: "Course: Velammal", w: 169, ls: -0.07 },
  { icon: <Github />, label: "IBM-EPBL/IBM-Proj...", w: 188, ls: 0.17 },
  { icon: <OneDrive />, label: "Aspire Assignments...", w: 192, ls: 0.1 },
  { icon: <CalBox>4</CalBox>, label: "Google Calendar -...", w: 170, ls: 0.2 },
];

const people = {
  nk: { name: "Nandhakumar Kk", w: 174, ls: 0.64 },
  ma: { name: "Mohamed Alim S", w: 170, ls: 0.42 },
  as: { name: "Amris Sarthy C V", w: 165, ls: 0.1 },
  ks: { name: "Kirithic Sa", w: 111, ls: 0.18 },
};
const everyone = ["nk", "ma", "as", "ks"];

const rows = [
  { who: ["ks"] },
  { who: everyone },
  { who: everyone },
  { who: ["nk"] },
  { who: ["nk"] },
  { who: everyone },
  { epic: "Implementing Web Application", task: "Create UI to interact with application", who: ["nk"] },
  { epic: "Implementing Web Application", task: "Create IBM DB2 and connect with python", who: ["nk"] },
];

const downloads = [
  { icon: <PdfIcon />, name: "Milestone and Acti....pdf", lit: true },
  { icon: <WordIcon />, name: "Milestone and Ac....docx" },
  { icon: <PdfIcon />, name: "Milestone and Acti....pdf" },
  { icon: <PdfIcon />, name: "Sprint Delivery Plan.pdf", lit: true },
  { icon: <Disc $bg="#2f93e0" $icon={13}><FaDocker /></Disc>, name: "https://desktop.docker.com", lit: true, dim: true },
];

/* ---------- sections ---------- */

const Tabs = () => (
  <TabStrip>
    {tabs.map((t, i) => (
      <Tab key={i} $active={t.active} $w={t.w || 92.45}>
        {t.icon}
        <TabTitle $active={t.active}>{t.title}</TabTitle>
        {t.active && <Cross w={11} />}
      </Tab>
    ))}
    <NewTab>
      <Svg w={15}><path d="M7.500 0v15M0 7.500h15" stroke="#dcdce0" strokeWidth="2.400" /></Svg>
    </NewTab>
    <WindowButtons>
      <WindowButton><Svg w={14} h={8}><path d="m.5.500 6.500 6.500L13.500.500" stroke="#8d8d90" /></Svg></WindowButton>
      <WindowButton><Svg w={13} h={2}><path d="M0 1h13" stroke="#8d8d90" /></Svg></WindowButton>
      <WindowButton>
        <Svg w={13} h={13}><path d="M.5 3.500h9v9h-9zM3 3V.500h9.500V10H10" stroke="#8d8d90" /></Svg>
      </WindowButton>
      <WindowButton><Cross w={13} stroke="#8d8d90" sw={1} /></WindowButton>
    </WindowButtons>
  </TabStrip>
);

const ToolbarRow = () => (
  <Toolbar>
    <NavGroup>
      <NavButton><Svg w={14} h={16}><path d="M12.500 1v14L1.500 8z" stroke="#6e707c" strokeWidth="1.400" /></Svg></NavButton>
      <NavButton><Svg w={14} h={16}><path d="M1.500 1v14l11-7z" stroke="#6e707c" strokeWidth="1.400" /></Svg></NavButton>
      <NavButton>
        <Svg w={18} h={18}>
          <path d="M15.600 5A7.300 7.300 0 1 0 16 11.500" stroke="#ececf0" strokeWidth="2" />
          <path d="M17.300 1v6.600h-6.400z" fill="#ececf0" />
        </Svg>
      </NavButton>
      <NavButton><Svg w={14} h={17}><path d="M1.500 1h11v14.500L7 10.800l-5.500 4.700z" stroke="#dcdde2" strokeWidth="1.600" /></Svg></NavButton>
    </NavGroup>
    <AddressBar>
      <Svg w={14} h={14}>
        <rect x="1.800" y="5.500" width="10.400" height="8.500" rx="1" fill="#9b9da3" />
        <path d="M4 6V4a3 3 0 0 1 6 0v2" stroke="#9b9da3" strokeWidth="1.700" />
      </Svg>
      <Url>
        careereducation.smartinternz.com<UrlPath>/student-assign-task/23013</UrlPath>
      </Url>
      <AddressTools>
        <ShareSlot>
          <Svg w={20} h={20}>
            <path d="M1.500 5v13h13v-3.500" stroke="#a9abb0" strokeWidth="1.500" />
            <path d="M5 14c.5-4 3.500-6.300 7.500-6.500V4.500l6 4.800-6 4.700v-3C9.500 11 7 11.800 5 14z" stroke="#a9abb0" strokeWidth="1.400" transform="translate(0 -2.500)" />
          </Svg>
        </ShareSlot>
        <BraveLion size={22} />
        <Bat />
      </AddressTools>
    </AddressBar>
    <Extensions>
      <NavButton $w={41.600}><MdExtension size={21} color="#e6e7eb" /></NavButton>
      <NavButton $w={41.600}>
        <Svg w={20} h={18}>
          <rect x=".8" y=".8" width="18.400" height="16.400" rx="1" stroke="#e6e7eb" strokeWidth="1.600" />
          <path d="M0 0h6.500v18H0z" fill="#e6e7eb" />
        </Svg>
      </NavButton>
      <NavButton $w={41.600}>
        <Svg w={21} h={18}>
          <path d="M1 3.500v10.700A2.800 2.800 0 0 0 3.800 17h12.900a2.300 2.300 0 0 0 2.300-2.300V6.300A2.300 2.300 0 0 0 16.700 4H3a2 1.600 0 0 1 0-3h12.500v2.500" stroke="#e6e7eb" strokeWidth="1.700" />
          <path d="M20 8h-6a2.500 2.500 0 0 0 0 5h6z" fill="#323444" stroke="#e6e7eb" strokeWidth="1.600" />
        </Svg>
      </NavButton>
      <NavButton $w={41.600}><Svg w={12} h={17}><path d="M0 1h12M2 8.500h10M0 16h12" stroke="#e6e7eb" strokeWidth="1.700" /></Svg></NavButton>
    </Extensions>
  </Toolbar>
);

const TaskList = () => (
  <Panel>
    <RowTail />
    {rows.map((r, i) => {
      const tall = r.who.length > 2;
      return (
        <TaskRow key={i} $h={tall ? 111.750 : 80}>
          <Select>{r.epic}<span /><Chevron w={12} /></Select>
          <Select>{r.task}<span /><Chevron w={12} /></Select>
          <Assignees $h={tall ? 86 : 52.500}>
            {r.who.map((id) => (
              <Tag key={id} $w={people[id].w} $ls={people[id].ls}>
                <TagRemove>×</TagRemove>
                {people[id].name}
              </Tag>
            ))}
          </Assignees>
          <ActionButton><CheckMark /></ActionButton>
          <ActionButton $danger><CrossMark /></ActionButton>
        </TaskRow>
      );
    })}
  </Panel>
);

const InstallerWindow = () => (
  <Installer>
    <TitleBar>
      <Disc $bg="#1d8fef" $icon={14}><FaDocker /></Disc>
      <TitleText>Installing Docker Desktop 4.13.1 (90346)</TitleText>
      <CaptionButtons>
        <CaptionButton><Svg w={12} h={13}><path d="M0 6.500h12" stroke="#000" /></Svg></CaptionButton>
        <CaptionButton><Svg w={13} h={13}><path d="M.5.500h12v12H.500z" stroke="#000" /></Svg></CaptionButton>
        <CaptionButton><Cross w={13} stroke="#000" sw={1.100} /></CaptionButton>
      </CaptionButtons>
    </TitleBar>
    <InstallerBody>
      <Heading>Configuration</Heading>
      <CheckRow>
        <CheckBox><Svg w={13} h={12}><path d="m1.500 6.200 3.200 3.600 6.800-8.300" stroke="#111" strokeWidth="2.400" /></Svg></CheckBox>
        Add shortcut to desktop
      </CheckRow>
    </InstallerBody>
    <InstallerFooter><OkButton>Ok</OkButton></InstallerFooter>
  </Installer>
);

const DownloadsShelf = () => (
  <Shelf>
    {downloads.map((d, i) => (
      <DownloadItem key={i} $lit={d.lit}>
        <DownloadIcon>{d.icon}</DownloadIcon>
        <DownloadName $dim={d.dim}>{d.name}</DownloadName>
        <DownloadMenu><Chevron up w={12} stroke="#e4e4e8" sw={2} /></DownloadMenu>
      </DownloadItem>
    ))}
    <ShelfActions>
      <ShowAll>Show all</ShowAll>
      <Cross w={12} stroke="#f0f0f2" sw={2} />
    </ShelfActions>
  </Shelf>
);

const SystemTaskbar = () => (
  <Taskbar>
    <StartButton><Windows mono /></StartButton>
    <SearchBox>
      <Svg w={21} h={21}>
        <circle cx="13" cy="7.500" r="6.500" stroke="#e4e4e4" strokeWidth="1.500" />
        <path d="M8.500 12.500.8 20.200" stroke="#e4e4e4" strokeWidth="1.500" />
      </Svg>
      <SearchText>Type here to search</SearchText>
      <Pharaoh />
    </SearchBox>
    <TaskButton $w={60}><Svg w={20}><circle cx="10" cy="10" r="8.500" stroke="#fff" strokeWidth="2.600" /></Svg></TaskButton>
    <TaskButton $w={60}>
      <Svg w={20} h={20}>
        <path d="M.7 0v3.500h12V0M.7 6.500h12v7.500H.7zM.7 20v-3.500h12V20M18.500 0v6M18.500 11v9" stroke="#fff" strokeWidth="1.300" />
        <path d="M17 6.500h3v3h-3z" fill="#fff" />
      </Svg>
    </TaskButton>
    <PinnedApps>
      <TaskButton $open><Explorer /></TaskButton>
      <TaskButton><Store /></TaskButton>
      <TaskButton><Mail /><MailBadge>99+</MailBadge></TaskButton>
      <TaskButton $open><BraveLion size={30} /></TaskButton>
      <TaskButton><Edge /></TaskButton>
      <TaskButton $open><VsCode /></TaskButton>
      <TaskButton $current><Disc $bg="#1d8fef" $size={30} $icon={23}><FaDocker /></Disc></TaskButton>
    </PinnedApps>
    <Tray>
      <Weather><Cloud /><span>29°C</span>Cloudy</Weather>
      <TrayCell $w={32}><Svg w={16} h={9}><path d="m.7 8.300 7.300-7 7.300 7" stroke="#f2f2f2" strokeWidth="1.400" /></Svg></TrayCell>
      <TrayCell $w={30}>
        <Svg w={15} h={19}>
          <path d="M3 1.800c2.500-1.400 5-1.400 7.500 0M3 17.200c2.500 1.400 5 1.400 7.500 0" stroke="#f2f2f2" strokeWidth="1.200" />
          <rect x="1" y="5" width="9" height="9" rx="1.500" stroke="#f2f2f2" strokeWidth="1.300" />
          <path d="M10.500 8.500 14 6v7l-3.500-2.500" stroke="#f2f2f2" strokeWidth="1.200" />
        </Svg>
      </TrayCell>
      <TrayCell $w={28}>
        <Svg w={21} h={14}>
          <path d="M5 3.500h14v9H5z" stroke="#f2f2f2" strokeWidth="1.200" />
          <path d="M7 5.500h10v5H7zM19.500 6H21v4h-1.500zM0 2h6v4L4 7.500H2L0 6z" fill="#f2f2f2" />
          <path d="M1.500 0v2M4.500 0v2M3 7v5.500h3" stroke="#f2f2f2" />
        </Svg>
      </TrayCell>
      <TrayCell $w={32}>
        <Svg w={17} h={16}>
          <path d="M1 15A14 14 0 0 1 15.500 1" stroke="#a6a8ad" strokeWidth="1.300" />
          <path d="M4.500 15A10.500 10.500 0 0 1 15.500 5M8 15a7 7 0 0 1 7.500-6.500" stroke="#f2f2f2" strokeWidth="1.300" />
          <circle cx="13.800" cy="13.300" r="1.800" fill="#f2f2f2" />
        </Svg>
      </TrayCell>
      <TrayCell $w={28}>
        <Svg w={21} h={17}>
          <path d="M1 6h2.500L8 1.800v13.400L3.500 11H1z" stroke="#f2f2f2" strokeWidth="1.300" />
          <path d="M11 6c1 1.500 1 3.500 0 5M14 4c2 2.800 2 6.200 0 9" stroke="#f2f2f2" strokeWidth="1.300" />
          <path d="M17 2c3 4 3 9 0 13" stroke="#c4c6ca" strokeWidth="1.200" />
        </Svg>
      </TrayCell>
      <TrayCell $w={48}>ENG</TrayCell>
      <Clock><span>12:29</span><DateText>04-11-2022</DateText></Clock>
      <Notifications>
        <Svg w={20} h={20}>
          <path d="M0 0h20v16h-6l-3 4v-4H0z" fill="#fff" />
          <path d="M4 4.500h12M4 8.500h12M4 12.500h7" stroke="#23252f" strokeWidth="1.400" />
        </Svg>
        <CountBadge>6</CountBadge>
      </Notifications>
    </Tray>
  </Taskbar>
);

export default function App() {
  return (
    <Screen>
      <GlobalStyle />
      <Tabs />
      <ToolbarRow />
      <BookmarksBar>
        {bookmarks.map((b) => (
          <Bookmark key={b.label} $w={b.w} $ls={b.ls}>{b.icon}<span>{b.label}</span></Bookmark>
        ))}
      </BookmarksBar>
      <Page>
        <Sidebar>
          <SidebarItem>
            <Svg w={24} h={26}>
              <rect x="1" y="5" width="22" height="20" rx="1.500" stroke="#3b4760" strokeWidth="1.500" />
              <path d="M1 4h22v4H1z" fill="#3b4760" />
              <path d="M6.500 2.500v3M17.500 2.500v3" stroke="#3b4760" strokeWidth="4.600" strokeLinecap="round" />
              <path d="M6.500 2.500v2.500M17.500 2.500v2.500" stroke="#fff" strokeWidth="1.800" strokeLinecap="round" />
              <path d="M1 13.500h22M1 19.500h22M6.500 8v17M12 8v17M17.500 8v17" stroke="#3b4760" />
            </Svg>
            <span>Ask Me Anything</span>
          </SidebarItem>
        </Sidebar>
        <TaskList />
        <ScrollTrack>
          <Svg w={10} h={6}><path d="m0 5.500 5-5 5 5z" fill="#505050" /></Svg>
          <ScrollThumb />
          <Svg w={10} h={6}><path d="m0 .5 5 5 5-5z" fill="#505050" /></Svg>
        </ScrollTrack>
      </Page>
      <DownloadsShelf />
      <SystemTaskbar />
      <InstallerWindow />
    </Screen>
  );
}
